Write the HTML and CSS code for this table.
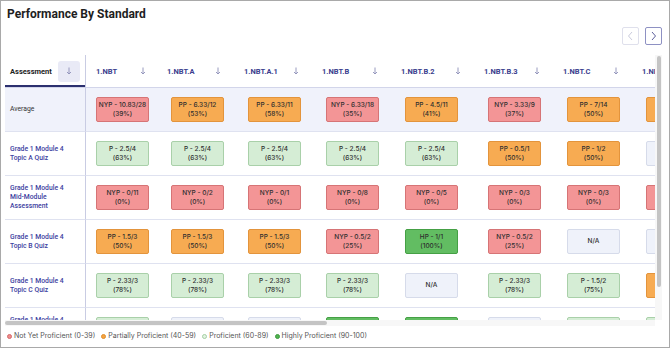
FILE: index.html
```html
<!DOCTYPE html>
<html lang="en">
<head>
<meta charset="utf-8">
<title>Performance By Standard</title>
<link rel="stylesheet" href="styles.css">
</head>
<body>
<section class="card">
  <h1 class="title">Performance By Standard</h1>
  <div class="pager">
    <button class="pager-btn prev" aria-label="Previous"><svg width="7" height="10" viewBox="0 0 7 10"><polyline points="5,1 1.5,5 5,9" fill="none" stroke="#c9cadc" stroke-width="1"/></svg></button>
    <button class="pager-btn next" aria-label="Next"><svg width="7" height="10" viewBox="0 0 7 10"><polyline points="2,1 5.5,5 2,9" fill="none" stroke="#5d609c" stroke-width="1"/></svg></button>
  </div>
  <div class="table-frame">
    <div class="viewport">
    <table class="grid">
      <colgroup>
        <col class="c-name"><col class="c1"><col class="c2"><col class="c3"><col class="c4"><col class="c5"><col class="c6"><col class="c7">
        <col class="cx"><col class="cx"><col class="cx"><col class="cx"><col class="cx"><col class="cx"><col class="cx"><col class="cx"><col class="cx">
      </colgroup>
      <thead>
        <tr class="head">
          <th class="h-name"><div class="hcell"><span>Assessment</span><span class="sort active"><svg width="6" height="8" viewBox="0 0 6 8"><path d="M3 0.5V7M1 5L3 7L5 5" fill="none" stroke="#8c8fb8" stroke-width="0.9"/></svg></span></div></th>
          <th><div class="hcell"><span>1.NBT</span><span class="sort"><svg width="6" height="8" viewBox="0 0 6 8"><path d="M3 0.5V7M1 5L3 7L5 5" fill="none" stroke="#8c8fb8" stroke-width="0.9"/></svg></span></div></th>
          <th><div class="hcell"><span>1.NBT.A</span><span class="sort"><svg width="6" height="8" viewBox="0 0 6 8"><path d="M3 0.5V7M1 5L3 7L5 5" fill="none" stroke="#8c8fb8" stroke-width="0.9"/></svg></span></div></th>
          <th><div class="hcell"><span>1.NBT.A.1</span><span class="sort"><svg width="6" height="8" viewBox="0 0 6 8"><path d="M3 0.5V7M1 5L3 7L5 5" fill="none" stroke="#8c8fb8" stroke-width="0.9"/></svg></span></div></th>
          <th><div class="hcell"><span>1.NBT.B</span><span class="sort"><svg width="6" height="8" viewBox="0 0 6 8"><path d="M3 0.5V7M1 5L3 7L5 5" fill="none" stroke="#8c8fb8" stroke-width="0.9"/></svg></span></div></th>
          <th><div class="hcell"><span>1.NBT.B.2</span><span class="sort"><svg width="6" height="8" viewBox="0 0 6 8"><path d="M3 0.5V7M1 5L3 7L5 5" fill="none" stroke="#8c8fb8" stroke-width="0.9"/></svg></span></div></th>
          <th><div class="hcell"><span>1.NBT.B.3</span><span class="sort"><svg width="6" height="8" viewBox="0 0 6 8"><path d="M3 0.5V7M1 5L3 7L5 5" fill="none" stroke="#8c8fb8" stroke-width="0.9"/></svg></span></div></th>
          <th><div class="hcell"><span>1.NBT.C</span><span class="sort"><svg width="6" height="8" viewBox="0 0 6 8"><path d="M3 0.5V7M1 5L3 7L5 5" fill="none" stroke="#8c8fb8" stroke-width="0.9"/></svg></span></div></th>
          <th><div class="hcell"><span>1.NBT.C.4</span><span class="sort"><svg width="6" height="8" viewBox="0 0 6 8"><path d="M3 0.5V7M1 5L3 7L5 5" fill="none" stroke="#8c8fb8" stroke-width="0.9"/></svg></span></div></th>
          <th><div class="hcell"><span>1.NBT.C.5</span><span class="sort"><svg width="6" height="8" viewBox="0 0 6 8"><path d="M3 0.5V7M1 5L3 7L5 5" fill="none" stroke="#8c8fb8" stroke-width="0.9"/></svg></span></div></th>
          <th><div class="hcell"><span>1.NBT.C.6</span><span class="sort"><svg width="6" height="8" viewBox="0 0 6 8"><path d="M3 0.5V7M1 5L3 7L5 5" fill="none" stroke="#8c8fb8" stroke-width="0.9"/></svg></span></div></th>
          <th><div class="hcell"><span>1.OA</span><span class="sort"><svg width="6" height="8" viewBox="0 0 6 8"><path d="M3 0.5V7M1 5L3 7L5 5" fill="none" stroke="#8c8fb8" stroke-width="0.9"/></svg></span></div></th>
          <th><div class="hcell"><span>1.OA.A</span><span class="sort"><svg width="6" height="8" viewBox="0 0 6 8"><path d="M3 0.5V7M1 5L3 7L5 5" fill="none" stroke="#8c8fb8" stroke-width="0.9"/></svg></span></div></th>
          <th><div class="hcell"><span>1.OA.A.1</span><span class="sort"><svg width="6" height="8" viewBox="0 0 6 8"><path d="M3 0.5V7M1 5L3 7L5 5" fill="none" stroke="#8c8fb8" stroke-width="0.9"/></svg></span></div></th>
          <th><div class="hcell"><span>1.OA.A.2</span><span class="sort"><svg width="6" height="8" viewBox="0 0 6 8"><path d="M3 0.5V7M1 5L3 7L5 5" fill="none" stroke="#8c8fb8" stroke-width="0.9"/></svg></span></div></th>
          <th><div class="hcell"><span>1.OA.B</span><span class="sort"><svg width="6" height="8" viewBox="0 0 6 8"><path d="M3 0.5V7M1 5L3 7L5 5" fill="none" stroke="#8c8fb8" stroke-width="0.9"/></svg></span></div></th>
          <th><div class="hcell"><span>1.OA.B.3</span><span class="sort"><svg width="6" height="8" viewBox="0 0 6 8"><path d="M3 0.5V7M1 5L3 7L5 5" fill="none" stroke="#8c8fb8" stroke-width="0.9"/></svg></span></div></th>
        </tr>
      </thead>
      <tbody>
        <tr class="avg">
          <th class="name plain">Average</th>
          <td><div class="chip nyp">NYP - 10.83/28<br>(39%)</div></td>
          <td><div class="chip pp">PP - 6.33/12<br>(53%)</div></td>
          <td><div class="chip pp">PP - 6.33/11<br>(58%)</div></td>
          <td><div class="chip nyp">NYP - 6.33/18<br>(35%)</div></td>
          <td><div class="chip pp">PP - 4.5/11<br>(41%)</div></td>
          <td><div class="chip nyp">NYP - 3.33/9<br>(37%)</div></td>
          <td><div class="chip pp">PP - 7/14<br>(50%)</div></td>
          <td><div class="chip pp">PP - 2.5/5<br>(50%)</div></td>
          <td><div class="chip nyp">NYP - 1.5/6<br>(25%)</div></td>
          <td><div class="chip pp">PP - 2/4<br>(50%)</div></td>
          <td><div class="chip pp">PP - 8.5/16<br>(53%)</div></td>
          <td><div class="chip p">P - 5/8<br>(63%)</div></td>
          <td><div class="chip pp">PP - 2.5/5<br>(50%)</div></td>
          <td><div class="chip p">P - 2.5/3<br>(83%)</div></td>
          <td><div class="chip nyp">NYP - 3/8<br>(38%)</div></td>
          <td><div class="chip nyp">NYP - 3/8<br>(38%)</div></td>
        </tr>
        <tr>
          <th class="name"><a href="#">Grade 1 Module 4 Topic A Quiz</a></th>
          <td><div class="chip p">P - 2.5/4<br>(63%)</div></td>
          <td><div class="chip p">P - 2.5/4<br>(63%)</div></td>
          <td><div class="chip p">P - 2.5/4<br>(63%)</div></td>
          <td><div class="chip p">P - 2.5/4<br>(63%)</div></td>
          <td><div class="chip p">P - 2.5/4<br>(63%)</div></td>
          <td><div class="chip pp">PP - 0.5/1<br>(50%)</div></td>
          <td><div class="chip pp">PP - 1/2<br>(50%)</div></td>
          <td><div class="chip na">N/A</div></td>
          <td><div class="chip na">N/A</div></td>
          <td><div class="chip na">N/A</div></td>
          <td><div class="chip p">P - 2/3<br>(67%)</div></td>
          <td><div class="chip p">P - 2/3<br>(67%)</div></td>
          <td><div class="chip p">P - 2/3<br>(67%)</div></td>
          <td><div class="chip na">N/A</div></td>
          <td><div class="chip na">N/A</div></td>
          <td><div class="chip na">N/A</div></td>
        </tr>
        <tr>
          <th class="name"><a href="#">Grade 1 Module 4 Mid-Module Assessment</a></th>
          <td><div class="chip nyp">NYP - 0/11<br>(0%)</div></td>
          <td><div class="chip nyp">NYP - 0/2<br>(0%)</div></td>
          <td><div class="chip nyp">NYP - 0/1<br>(0%)</div></td>
          <td><div class="chip nyp">NYP - 0/8<br>(0%)</div></td>
          <td><div class="chip nyp">NYP - 0/5<br>(0%)</div></td>
          <td><div class="chip nyp">NYP - 0/3<br>(0%)</div></td>
          <td><div class="chip nyp">NYP - 0/3<br>(0%)</div></td>
          <td><div class="chip nyp">NYP - 0/2<br>(0%)</div></td>
          <td><div class="chip nyp">NYP - 0/1<br>(0%)</div></td>
          <td><div class="chip na">N/A</div></td>
          <td><div class="chip nyp">NYP - 0/4<br>(0%)</div></td>
          <td><div class="chip nyp">NYP - 0/2<br>(0%)</div></td>
          <td><div class="chip nyp">NYP - 0/2<br>(0%)</div></td>
          <td><div class="chip na">N/A</div></td>
          <td><div class="chip nyp">NYP - 0/2<br>(0%)</div></td>
          <td><div class="chip nyp">NYP - 0/2<br>(0%)</div></td>
        </tr>
        <tr>
          <th class="name"><a href="#">Grade 1 Module 4 Topic B Quiz</a></th>
          <td><div class="chip pp">PP - 1.5/3<br>(50%)</div></td>
          <td><div class="chip pp">PP - 1.5/3<br>(50%)</div></td>
          <td><div class="chip pp">PP - 1.5/3<br>(50%)</div></td>
          <td><div class="chip nyp">NYP - 0.5/2<br>(25%)</div></td>
          <td><div class="chip hp">HP - 1/1<br>(100%)</div></td>
          <td><div class="chip nyp">NYP - 0.5/2<br>(25%)</div></td>
          <td><div class="chip na">N/A</div></td>
          <td><div class="chip na">N/A</div></td>
          <td><div class="chip na">N/A</div></td>
          <td><div class="chip na">N/A</div></td>
          <td><div class="chip pp">PP - 1/2<br>(50%)</div></td>
          <td><div class="chip pp">PP - 1/2<br>(50%)</div></td>
          <td><div class="chip na">N/A</div></td>
          <td><div class="chip pp">PP - 1/2<br>(50%)</div></td>
          <td><div class="chip na">N/A</div></td>
          <td><div class="chip na">N/A</div></td>
        </tr>
        <tr>
          <th class="name"><a href="#">Grade 1 Module 4 Topic C Quiz</a></th>
          <td><div class="chip p">P - 2.33/3<br>(78%)</div></td>
          <td><div class="chip p">P - 2.33/3<br>(78%)</div></td>
          <td><div class="chip p">P - 2.33/3<br>(78%)</div></td>
          <td><div class="chip p">P - 2.33/3<br>(78%)</div></td>
          <td><div class="chip na">N/A</div></td>
          <td><div class="chip p">P - 2.33/3<br>(78%)</div></td>
          <td><div class="chip p">P - 1.5/2<br>(75%)</div></td>
          <td><div class="chip pp">PP - 1/2<br>(50%)</div></td>
          <td><div class="chip na">N/A</div></td>
          <td><div class="chip p">P - 1.5/2<br>(75%)</div></td>
          <td><div class="chip na">N/A</div></td>
          <td><div class="chip na">N/A</div></td>
          <td><div class="chip na">N/A</div></td>
          <td><div class="chip na">N/A</div></td>
          <td><div class="chip na">N/A</div></td>
          <td><div class="chip na">N/A</div></td>
        </tr>
        <tr>
          <th class="name"><a href="#">Grade 1 Module 4 End-of-Module Assessment</a></th>
          <td><div class="chip p">P - 9/12<br>(75%)</div></td>
          <td><div class="chip na">N/A</div></td>
          <td><div class="chip na">N/A</div></td>
          <td><div class="chip hp">HP - 9/9<br>(100%)</div></td>
          <td><div class="chip hp">HP - 6/6<br>(100%)</div></td>
          <td><div class="chip na">N/A</div></td>
          <td><div class="chip p">P - 3/4<br>(75%)</div></td>
          <td><div class="chip p">P - 3/4<br>(75%)</div></td>
          <td><div class="chip na">N/A</div></td>
          <td><div class="chip na">N/A</div></td>
          <td><div class="chip p">P - 5/7<br>(71%)</div></td>
          <td><div class="chip p">P - 5/7<br>(71%)</div></td>
          <td><div class="chip hp">HP - 3/3<br>(100%)</div></td>
          <td><div class="chip p">P - 2/3<br>(67%)</div></td>
          <td><div class="chip pp">PP - 2/4<br>(50%)</div></td>
          <td><div class="chip pp">PP - 2/4<br>(50%)</div></td>
        </tr>
      </tbody>
    </table>
    </div>
    <div class="vtrack" aria-hidden="true"><div class="vthumb"></div></div>
    <div class="htrack" aria-hidden="true"><div class="hthumb"></div></div>
    <div class="corner" aria-hidden="true"></div>
  </div>
  <ul class="legend">
    <li><span class="dot nyp"></span>Not Yet Proficient (0-39)</li>
    <li><span class="dot pp"></span>Partially Proficient (40-59)</li>
    <li><span class="dot p"></span>Proficient (60-89)</li>
    <li><span class="dot hp"></span>Highly Proficient (90-100)</li>
  </ul>
</section>
</body>
</html>
```

FILE: styles.css
```css
html, body {
  margin: 0;
  background: #ffffff;
}

body {
  font-family: Roboto, "Liberation Sans", sans-serif;
  color: #2b2b2b;
}

.card {
  box-sizing: border-box;
  width: 670px;
  height: 348px;
  border: 1px solid #a9a9a9;
  padding: 4px 7px 0 4px;
  background: #fff;
  overflow: hidden;
}

.title {
  margin: 0 0 0 2px;
  font-size: 12px;
  font-weight: 700;
  line-height: 18px;
  color: #1e1e1e;
}

.pager {
  display: flex;
  justify-content: flex-end;
  gap: 6px;
  margin-top: 4px;
  height: 18px;
}

.pager-btn {
  box-sizing: border-box;
  width: 17px;
  height: 18px;
  padding: 0;
  border: 1px solid #dfe0ec;
  border-radius: 2px;
  background: #fff;
  display: flex;
  align-items: center;
  justify-content: center;
}

.pager-btn.next {
  border-color: #8e91c3;
}

.table-frame {
  margin-top: 10px;
  display: grid;
  grid-template-columns: 650px 7px;
  grid-template-rows: 265px 6px;
}

.viewport {
  overflow: hidden;
}

.vtrack {
  background: #f7f7f7;
  display: flex;
  justify-content: center;
  padding-top: 1px;
  box-sizing: border-box;
}

.vthumb {
  width: 4px;
  height: 231px;
  border-radius: 2px;
  background: #c4c4c4;
}

.htrack {
  background: #f7f7f7;
  display: flex;
  align-items: center;
}

.hthumb {
  width: 322px;
  height: 4px;
  border-radius: 2px;
  background: #c4c4c4;
}

.corner {
  background: #fff;
}

.grid {
  table-layout: fixed;
  width: 1315px;
  border-collapse: separate;
  border-spacing: 0;
}

.c-name { width: 81px; }
.c1 { width: 75px; }
.c2 { width: 77px; }
.c3 { width: 78px; }
.c4 { width: 79px; }
.c5 { width: 83px; }
.c6 { width: 79px; }
.c7 { width: 79px; }
.cx { width: 76px; }

.grid th,
.grid td {
  padding: 0;
  box-sizing: border-box;
  border-bottom: 1px solid #dfe2f0;
  vertical-align: middle;
  text-align: left;
}

.head {
  height: 33px;
}

.head th {
  border-bottom-color: #d2d5ea;
  padding: 0 9px 0 6px;
  font-size: 7.5px;
  font-weight: 700;
  color: #3a3e8e;
}

.head th.h-name + th {
  padding-left: 10px;
  padding-right: 7px;
}

.head th.h-name {
  padding: 0 5px 0 5px;
  color: #222;
  box-shadow: inset 0 -2px 0 #2c306f;
}

.hcell {
  display: flex;
  align-items: center;
  justify-content: space-between;
}

.sort {
  width: 22px;
  height: 21px;
  border-radius: 3px;
  display: flex;
  align-items: center;
  justify-content: center;
}

.sort.active {
  background: #e9eaf6;
}

.grid tbody tr {
  height: 44px;
}

.grid .avg th,
.grid .avg td {
  background: #f0f2fb;
}

.h-name,
.name {
  border-right: 1px solid #c9cce3;
}

.grid .name {
  padding: 0 14px 0 5px;
  font-size: 6.8px;
  font-weight: 500;
  line-height: 9px;
}

.name a {
  color: #3c40a0;
  text-decoration: none;
}

.name.plain {
  color: #333;
  font-weight: 400;
}

.grid td {
  padding-left: 10px;
}

.chip {
  box-sizing: border-box;
  width: 53px;
  height: 25px;
  border: 1px solid;
  border-radius: 2px;
  display: flex;
  align-items: center;
  justify-content: center;
  text-align: center;
  font-family: Inter, "Noto Sans", sans-serif;
  font-size: 6.5px;
  font-weight: 500;
  line-height: 9px;
  color: #2e2e2e;
}

.chip.nyp { background: #f39596; border-color: #d67476; }
.chip.pp { background: #f7ab52; border-color: #e3943c; }
.chip.p { background: #d5edd5; border-color: #a9d0a9; }
.chip.hp { background: #62bd62; border-color: #45a045; }
.chip.na { background: #eff2fa; border-color: #d6dbea; }

.legend {
  list-style: none;
  margin: 5px 0 0 2px;
  padding: 0;
  display: flex;
  gap: 6px;
  font-family: Inter, "Noto Sans", sans-serif;
  font-size: 7px;
  line-height: 10px;
  color: #555;
}

.legend li {
  display: flex;
  align-items: center;
  gap: 2px;
}

.dot {
  box-sizing: border-box;
  width: 5px;
  height: 5px;
  border-radius: 50%;
  border: 1px solid;
}

.dot.nyp { background: #f08c8c; border-color: #d46a6a; }
.dot.pp { background: #f5a340; border-color: #e08f2c; }
.dot.p { background: #e3f3e3; border-color: #a3cfa3; }
.dot.hp { background: #4fb34f; border-color: #3f9a3f; }
```
